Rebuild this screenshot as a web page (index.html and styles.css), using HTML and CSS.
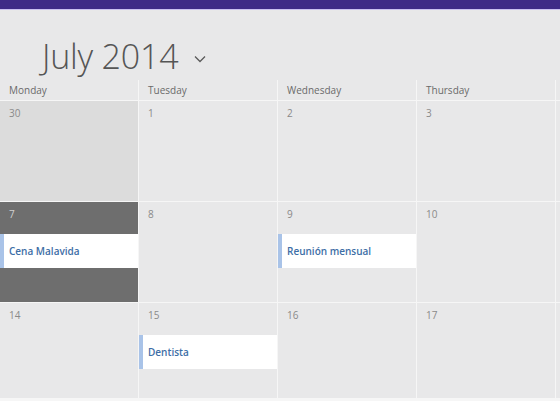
FILE: index.html
```html
<!DOCTYPE html>
<html>
<head>
<meta charset="utf-8">
<link rel="stylesheet" href="styles.css">
</head>
<body>
<div class="topbar"></div>
<header class="title-row">
  <h1 class="month">July 2014</h1>
  <svg class="chev" width="12" height="8" viewBox="0 0 12 8"><path d="M1 1.5 L6 6.5 L11 1.5" fill="none" stroke="#5a5a5a" stroke-width="1.3"/></svg>
</header>
<div class="calendar">
  <div class="dow">Monday</div>
  <div class="dow">Tuesday</div>
  <div class="dow">Wednesday</div>
  <div class="dow">Thursday</div>
  <div class="dow"></div>

  <div class="cell out"><span class="date">30</span></div>
  <div class="cell"><span class="date">1</span></div>
  <div class="cell"><span class="date">2</span></div>
  <div class="cell"><span class="date">3</span></div>
  <div class="cell"></div>

  <div class="cell today"><span class="date">7</span><div class="event">Cena Malavida</div></div>
  <div class="cell"><span class="date">8</span></div>
  <div class="cell"><span class="date">9</span><div class="event">Reunión mensual</div></div>
  <div class="cell"><span class="date">10</span></div>
  <div class="cell"></div>

  <div class="cell"><span class="date">14</span></div>
  <div class="cell"><span class="date">15</span><div class="event">Dentista</div></div>
  <div class="cell"><span class="date">16</span></div>
  <div class="cell"><span class="date">17</span></div>
  <div class="cell"></div>
</div>
</body>
</html>
```

FILE: styles.css
```css
html, body {
  margin: 0;
  padding: 0;
  background: #e8e8e9;
  width: 560px;
  height: 401px;
  overflow: hidden;
  font-family: "Open Sans", "Noto Sans", sans-serif;
}
.topbar {
  height: 9px;
  background: #3e2a87;
  border-bottom: 1px solid #c9bff0;
}
.title-row {
  height: 70px;
  display: flex;
  align-items: flex-start;
  padding-left: 42px;
  box-sizing: border-box;
}
.month {
  margin: 22px 0 0 0;
  font-size: 34px;
  font-weight: 300;
  color: #555;
  line-height: 48px;
  letter-spacing: -0.2px;
}
.chev {
  margin: 45px 0 0 16px;
}
.calendar {
  display: grid;
  grid-template-columns: repeat(4, 138px) 1fr;
  grid-template-rows: 20px 100px 100px 95px 10px;
  column-gap: 1px;
  row-gap: 1px;
  background: #f6f6f6;
  width: 560px;
}
.dow {
  background: #e8e8e9;
  font-size: 10px;
  color: #6a6a6a;
  padding-left: 9px;
  line-height: 20px;
  overflow: hidden;
}
.cell {
  background: #e8e8e9;
  display: flex;
  flex-direction: column;
  overflow: hidden;
}
.cell.out {
  background: #dcdcdc;
}
.cell.today {
  background: #6e6e6e;
}
.date {
  font-size: 10px;
  color: #8a8a8a;
  padding: 4px 0 0 9px;
  line-height: 16px;
  height: 28px;
  box-sizing: border-box;
}
.today .date {
  color: #d0d0d0;
}
.event {
  height: 34px;
  background: #fff;
  border-left: 4px solid #a9c3e8;
  padding-left: 5px;
  font-size: 10px;
  font-weight: 600;
  color: #3d6ea6;
  line-height: 34px;
  margin-top: 4px;
  white-space: nowrap;
}
```
